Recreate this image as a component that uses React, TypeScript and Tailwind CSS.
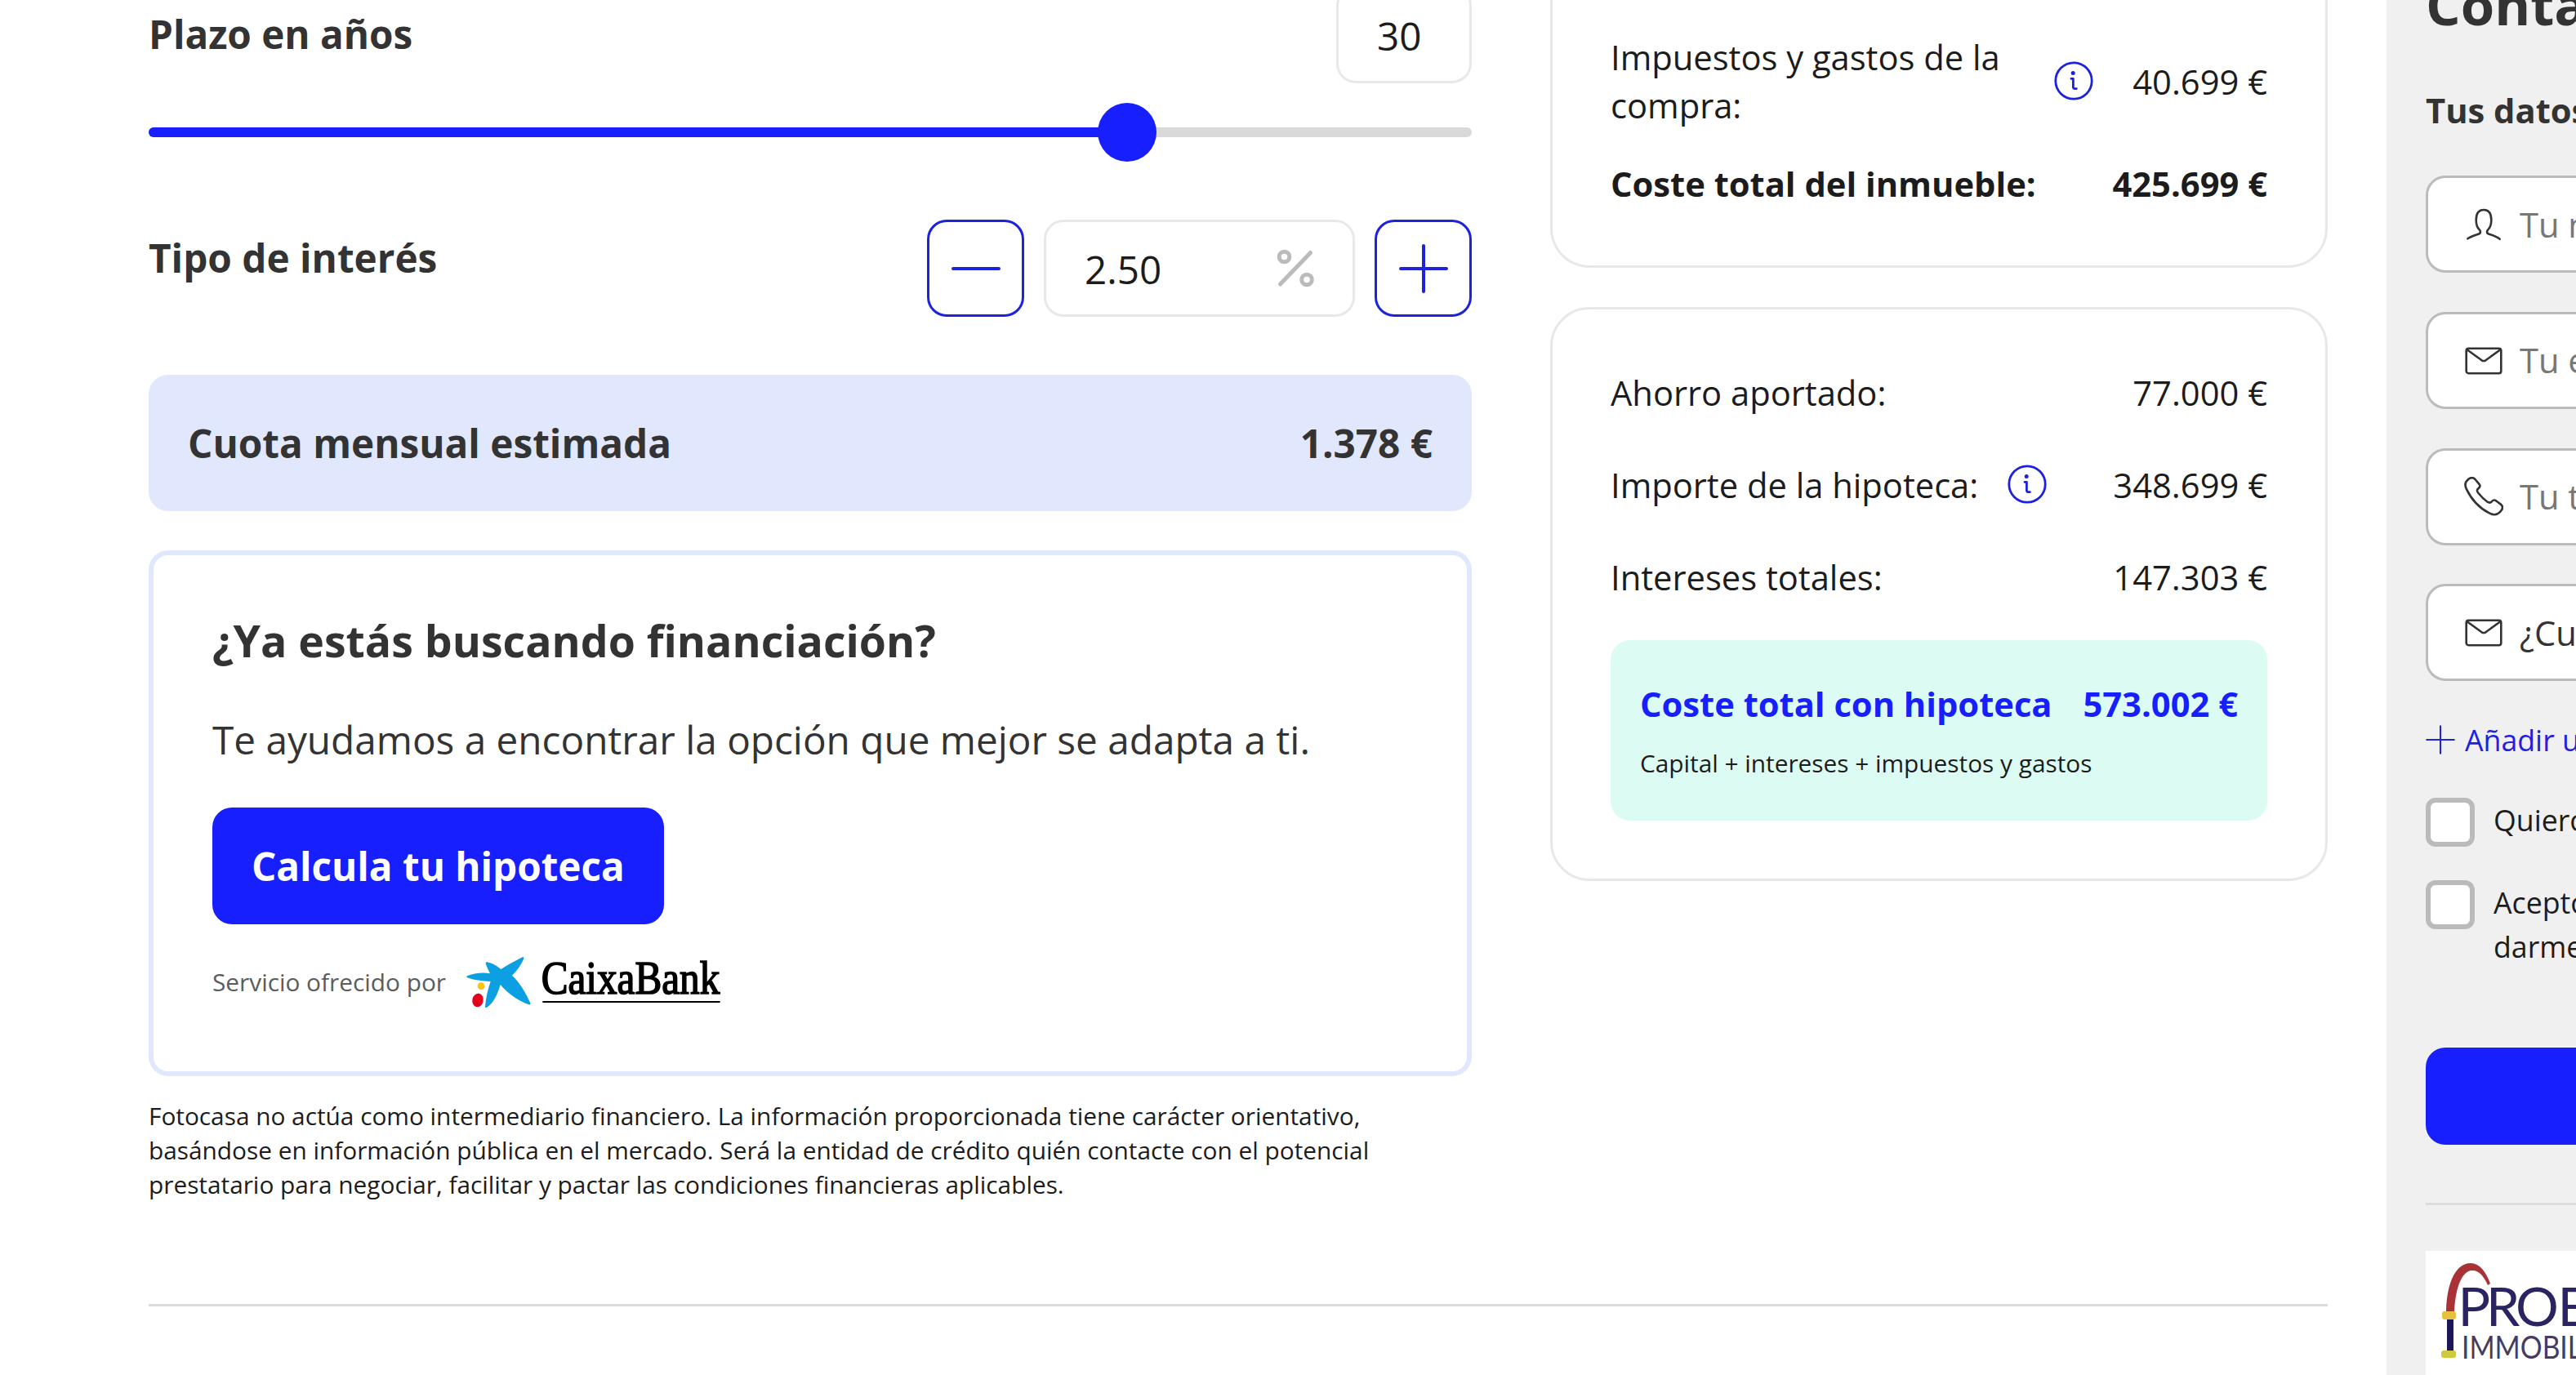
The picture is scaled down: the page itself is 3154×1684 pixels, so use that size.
import type { ReactNode } from "react";

function InfoIcon() {
    return (
        <svg className="size-12 shrink-0" viewBox="0 0 48 48" fill="none" stroke="#1d22dc" strokeWidth="2.8" strokeLinecap="round" strokeLinejoin="round">
            <circle cx="24" cy="24" r="22.2" />
            <path d="M21 21.4h2.4v10.2q0 2 2 2h2" />
            <circle cx="23.2" cy="14.6" r="1.1" fill="#1d22dc" />
        </svg>
    );
}

function UserIcon() {
    return (
        <svg className="h-12 w-12" viewBox="0 0 48 48" fill="none" stroke="#333333" strokeWidth="2.6" strokeLinecap="round">
            <path d="M4.4 41.3C8.6 38.2 14.5 36.8 18.6 35.2C20.6 34.3 20.2 31.6 18.4 29.8C15.6 27 14.7 22.8 14.7 18.4C14.7 9.6 18.2 6 24 6S33.3 9.6 33.3 18.4C33.3 22.8 32.4 27 29.6 29.8C27.8 31.6 27.4 34.3 29.4 35.2C33.5 36.8 39.8 38.4 43.6 41.8" />
        </svg>
    );
}

function MailIcon() {
    return (
        <svg className="h-12 w-12" viewBox="0 0 48 48" fill="none" stroke="#333333" strokeWidth="2.6" strokeLinejoin="round">
            <rect x="2.7" y="8.8" width="42.6" height="30.4" rx="2.6" />
            <path d="M3.6 10.2L21.6 23.3Q24 24.8 26.4 23.3L44.4 10.2" />
        </svg>
    );
}

function PhoneIcon() {
    return (
        <svg className="h-12 w-12" viewBox="0 0 48 48" fill="none" stroke="#333333" strokeWidth="2.6" strokeLinejoin="round">
            <path d="M5.2 2.9C8.2 .6 11.2 .6 13.5 3L18.8 9.4C20 11.3 19.4 12.7 17.8 13.9C15.3 15.7 15.5 17.5 17.3 19.7C20.8 24 24.5 27.8 28.6 30.7C30.6 32 32.3 32 33.8 30.3C35.5 28.2 37.2 28 39 29.2L45.2 33.9C47.4 35.8 47.4 38.6 45.6 41C41.7 46.7 37.2 47.6 31.3 44.7C18.8 38.4 8.7 27.3 2.7 14.6C.4 9.6 1.4 5.9 5.2 2.9Z" />
        </svg>
    );
}

function PlusIcon({ className, strokeWidth }: { className: string; strokeWidth: number }) {
    return (
        <svg className={className} viewBox="0 0 60 60" fill="none" stroke="#1d22dc" strokeWidth={strokeWidth} strokeLinecap="round">
            <path d="M2 30h56M30 2v56" />
        </svg>
    );
}

function CaixaBankLogo() {
    return (
        <svg className="ml-6 h-[68px] w-[316px]" viewBox="60 58 948 204">
            <path
                fill="#0c9fe2"
                d="M65 137C90 127 122 123 150 128C150 128 138 104 134 92C134 86 138 85 144 87C160 90 178 101 190 112C215 96 245 80 270 67Q275 67 274 74C264 96 250 118 231 135C258 160 283 200 299 239Q297 244 290 241C255 228 215 202 188 169C178 202 164 236 138 253Q132 256 132 250C134 220 142 186 152 157C122 156 90 152 66 143Q63 140 65 137Z"
            />
            <circle cx="117" cy="174" r="13" fill="#ffc20e" />
            <ellipse cx="105" cy="226" rx="20" ry="25" fill="#e2001a" transform="rotate(12 105 226)" />
            <text x="338" y="203" fontFamily="'Liberation Serif', serif" fontSize="168" fill="#000" stroke="#000" strokeWidth="5" textLength="656" lengthAdjust="spacingAndGlyphs">CaixaBank</text>
            <path d="M343 232h652" stroke="#000" strokeWidth="6" />
        </svg>
    );
}

function AgencyLogo() {
    return (
        <svg className="block h-[152px] w-[184px]" viewBox="0 0 184 152">
            <path d="M25 74C26 36 38 15 55 15C66 15 74 26 79 40L76 42C71 30 64 23 56 24C46 25 37 40 35 74Z" fill="#a83236" />
            <rect x="20" y="74" width="17" height="10" rx="3" fill="#e6c13e" />
            <rect x="26" y="84" width="8" height="38" fill="#1d1657" />
            <rect x="19" y="122" width="18" height="9" rx="3" fill="#cfc93f" />
            <text x="39.5 74 110 161.5" y="92" fontFamily="Lato, sans-serif" fontSize="66" fill="#2b2463">PROE</text>
            <text x="44" y="132" fontFamily="Lato, sans-serif" fontSize="38" fill="#463c60" textLength="147" lengthAdjust="spacingAndGlyphs">IMMOBIL</text>
        </svg>
    );
}

function Row({ label, value, info }: { label: string; value: string; info?: boolean }) {
    return (
        <div className="flex h-[60px] items-center justify-between">
            <span className="flex items-center gap-9">
                {label}
                {info && <InfoIcon />}
            </span>
            <span>{value}</span>
        </div>
    );
}

function Field({ icon, text, dark }: { icon: ReactNode; text: string; dark?: boolean }) {
    return (
        <div className="flex h-[119px] w-[900px] items-center gap-5 rounded-3xl border-[3px] border-[#bbbbbb] bg-white pl-[44px] text-[41.7px]">
            {icon}
            <span className={dark ? "text-[#333333]" : "text-[#777777]"}>{text}</span>
        </div>
    );
}

export default function App() {
    return (
        <div className="flex h-[1684px] w-[3154px] overflow-hidden bg-white font-['Open_Sans',sans-serif] text-[#1c1c1c]">
            <main className="w-[2922px] shrink-0 pl-[182px] pr-[72px]">
                <div className="flex h-[1597px] gap-24 border-b-[3px] border-[#dcdcdc] box-content">
                    {/* Calculator */}
                    <section className="-mt-[17px] w-[1620px] shrink-0">
                        <div className="flex justify-between">
                            <h3 className="pt-[23px] text-[47.6px] leading-[72px] font-bold text-[#333333]">Plazo en años</h3>
                            <div className="flex h-[119px] w-[166px] items-center rounded-3xl border-[3px] border-[#e8e8e8] pt-0.5 pl-[47px] text-[47.6px]">30</div>
                        </div>

                        <div className="relative mt-6 flex h-[72px] items-center">
                            <div className="h-3 w-full rounded-full bg-[#d9d9d9]">
                                <div className="h-3 w-[1200px] rounded-full bg-[#171fff]" />
                            </div>
                            <div className="absolute left-[1161.5px] size-[72px] rounded-full bg-[#171fff]" />
                        </div>

                        <div className="mt-[71px] flex justify-between">
                            <h3 className="pt-[11px] text-[47.7px] leading-[72px] font-bold text-[#333333]">Tipo de interés</h3>
                            <div className="flex gap-6">
                                <div className="flex size-[119px] items-center justify-center rounded-3xl border-[3px] border-[#1d22dc]">
                                    <svg className="size-[60px]" viewBox="0 0 60 60" stroke="#1d22dc" strokeWidth="4" strokeLinecap="round">
                                        <path d="M2 30h56" />
                                    </svg>
                                </div>
                                <div className="flex h-[119px] w-[381px] items-center justify-between rounded-3xl border-[3px] border-[#e8e8e8] pr-[46px] pl-[47px] text-[47.6px]">
                                    <span className="pt-0.5">2.50</span>
                                    <svg className="size-12" viewBox="0 0 48 48" fill="none" stroke="#bbbbbb" strokeWidth="5" strokeLinecap="round">
                                        <circle cx="10.5" cy="9.5" r="6.3" />
                                        <circle cx="38" cy="37.5" r="6.3" />
                                        <path d="M42.5 4.5L5.5 43" />
                                    </svg>
                                </div>
                                <div className="flex size-[119px] items-center justify-center rounded-3xl border-[3px] border-[#1d22dc]">
                                    <PlusIcon className="size-[60px]" strokeWidth={4} />
                                </div>
                            </div>
                        </div>

                        <div className="mt-[71px] flex h-[167px] items-center justify-between rounded-3xl bg-[#e1e8fe] px-12 text-[47.7px] font-bold text-[#333333]">
                            <span>Cuota mensual estimada</span>
                            <span>1.378 €</span>
                        </div>

                        {/* Financing banner */}
                        <div className="mt-12 h-[644px] rounded-3xl border-[6px] border-[#e1e8fe] px-[72px] pt-[63px]">
                            <h2 className="text-[53.6px] leading-[84px] font-bold text-[#333333]">¿Ya estás buscando financiación?</h2>
                            <p className="mt-[43px] text-[47.7px] leading-[72px] text-[#333333]">Te ayudamos a encontrar la opción que mejor se adapta a ti.</p>
                            <button className="mt-[47px] flex h-[143px] items-center rounded-3xl bg-[#171fff] px-12 text-[47.6px] font-bold text-white">Calcula tu hipoteca</button>
                            <div className="mt-[37px] flex items-center text-[29.8px] text-[#5c5c5c]">
                                <span>Servicio ofrecido por</span>
                                <CaixaBankLogo />
                            </div>
                        </div>

                        <p className="mt-7 text-[29.8px] leading-[41.8px] whitespace-nowrap">
                            Fotocasa no actúa como intermediario financiero. La información proporcionada tiene carácter orientativo,
                            <br />
                            basándose en información pública en el mercado. Será la entidad de crédito quién contacte con el potencial
                            <br />
                            prestatario para negociar, facilitar y pactar las condiciones financieras aplicables.
                        </p>
                    </section>

                    {/* Cost summary */}
                    <section className="w-[952px] shrink-0 text-[41.7px] leading-[59px] whitespace-nowrap">
                        <div className="h-[328px] rounded-b-[48px] border-[3px] border-t-0 border-[#e8e8e8] px-[71px] pt-[40px]">
                            <div className="flex items-center">
                                <span className="flex-1">
                                    Impuestos y gastos de la
                                    <br />
                                    compra:
                                </span>
                                <InfoIcon />
                                <span className="ml-12">40.699 €</span>
                            </div>
                            <div className="mt-[37px] flex justify-between font-bold">
                                <span>Coste total del inmueble:</span>
                                <span>425.699 €</span>
                            </div>
                        </div>

                        <div className="mt-12 h-[703px] rounded-[48px] border-[3px] border-[#e8e8e8] px-[71px] pt-[71px]">
                            <div className="flex flex-col gap-[53px]">
                                <Row label="Ahorro aportado:" value="77.000 €" />
                                <Row label="Importe de la hipoteca:" value="348.699 €" info />
                                <Row label="Intereses totales:" value="147.303 €" />
                            </div>
                            <div className="mt-[48px] h-[221px] rounded-3xl bg-[#dcfbf3] px-9 pt-[48px]">
                                <div className="flex justify-between font-bold text-[#171fff]">
                                    <span>Coste total con hipoteca</span>
                                    <span>573.002 €</span>
                                </div>
                                <p className="mt-[23px] text-[29.8px] leading-[42px]">Capital + intereses + impuestos y gastos</p>
                            </div>
                        </div>
                    </section>
                </div>
            </main>

            {/* Contact form, runs past the right edge */}
            <aside className="w-[232px] shrink-0 overflow-hidden bg-[#f0f0f0] pl-12 whitespace-nowrap">
                <h2 className="-mt-[45px] text-[67px] leading-[100px] font-bold text-[#333333]">Contacta</h2>
                <h3 className="mt-[50px] text-[41.7px] leading-[60px] font-bold text-[#333333]">Tus datos</h3>
                <div className="mt-[50.4px] flex flex-col gap-[47.7px]">
                    <Field icon={<UserIcon />} text="Tu nombre" />
                    <Field icon={<MailIcon />} text="Tu email" />
                    <Field icon={<PhoneIcon />} text="Tu teléfono" />
                    <Field icon={<MailIcon />} text="¿Cuándo" dark />
                </div>
                <div className="mt-[45px] flex h-[54px] items-center gap-3 text-[35.7px] text-[#1d22dc]">
                    <PlusIcon className="size-9 shrink-0" strokeWidth={3.4} />
                    Añadir un mensaje
                </div>
                <div className="mt-[43.6px] flex gap-[23px] text-[35.7px] leading-[54px]">
                    <div className="size-[60px] shrink-0 rounded-xl border-[6px] border-[#bbbbbb] bg-white" />
                    <span>Quiero recibir</span>
                </div>
                <div className="mt-[41px] flex gap-[23px] text-[35.7px] leading-[54px]">
                    <div className="size-[60px] shrink-0 rounded-xl border-[6px] border-[#bbbbbb] bg-white" />
                    <span>
                        Acepto las
                        <br />
                        darme de
                    </span>
                </div>
                <div className="mt-[97px] h-[119px] w-[900px] rounded-3xl bg-[#171fff]" />
                <div className="mt-[71px] h-[3px] w-[900px] bg-[#dcdcdc]" />
                <div className="mt-[56px] w-[900px] bg-white">
                    <AgencyLogo />
                </div>
            </aside>
        </div>
    );
}
